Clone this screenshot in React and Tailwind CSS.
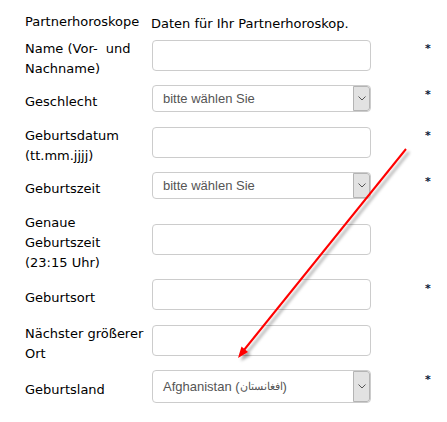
export default function App() {
  const Star = () => (
    <div className="absolute left-[400px] top-[0px] h-[16px] text-[11px] leading-[16px] mt-[2px] font-bold text-[#0b1a3a] font-['DejaVu_Sans',sans-serif]">*</div>
  );
  const Input = ({ h = 31 }) => (
    <div className="w-[219px] border border-[#cccccc] rounded-[4px] bg-white" style={{ height: h }} />
  );
  const Select = ({ text, h = 27 }) => (
    <div
      className="w-[219px] border border-[#cccccc] rounded-[4px] bg-white flex items-stretch overflow-hidden"
      style={{ height: h }}
    >
      <div className="flex-1 flex items-center pl-[10px] text-[13px] text-[#555555] font-['Liberation_Sans',sans-serif] whitespace-nowrap">
        {text}
      </div>
      <div className="w-[17px] bg-[#e2e2e2] border border-[#b4b4b4] rounded-r-[3px] flex items-center justify-center">
        <svg width="8" height="5" viewBox="0 0 8 5">
          <path d="M0.5 0.5 L4 4 L7.5 0.5" fill="none" stroke="#555" strokeWidth="1" />
        </svg>
      </div>
    </div>
  );
  const Row = ({ label, children, star }) => (
    <div className="relative flex items-center">
      <div className="w-[126px] shrink-0 text-[13px] leading-[20px] text-[#000] whitespace-nowrap">{label}</div>
      <div className="pb-[7px] pl-[1px]">{children}</div>
      {star && <Star />}
    </div>
  );
  return (
    <div className="relative w-[447px] h-[422px] overflow-hidden bg-white font-['DejaVu_Sans',sans-serif]">
      <div className="pl-[25px] pt-[12px] flex flex-col gap-[6.5px]">
        <div className="flex items-center text-[13px] leading-[20px] text-[#000]">
          <div className="w-[126px] shrink-0 whitespace-nowrap">Partnerhoroskope</div>
          <div className="whitespace-nowrap relative top-[2px]">Daten für Ihr Partnerhoroskop.</div>
        </div>
        <Row star label={<>Name (Vor-&nbsp; und<br />Nachname)</>}>
          <Input />
        </Row>
        <Row star label="Geschlecht">
          <Select text="bitte wählen Sie" />
        </Row>
        <Row star label={<>Geburtsdatum<br />(tt.mm.jjjj)</>}>
          <Input />
        </Row>
        <Row star label="Geburtszeit">
          <Select text="bitte wählen Sie" />
        </Row>
        <Row label={<>Genaue<br />Geburtszeit<br />(23:15 Uhr)</>}>
          <Input />
        </Row>
        <Row star label="Geburtsort">
          <Input />
        </Row>
        <Row label={<>Nächster größerer<br />Ort</>}>
          <Input />
        </Row>
        <Row star label="Geburtsland">
          <Select h={33} text={<>Afghanistan (<span className="text-[11px]">افغانستان</span>)</>} />
        </Row>
      </div>
      <svg className="absolute inset-0 pointer-events-none" width="447" height="422">
        <defs>
          <filter id="sh" x="-20%" y="-20%" width="140%" height="140%">
            <feDropShadow dx="3" dy="3" stdDeviation="1.5" floodColor="#000" floodOpacity="0.35" />
          </filter>
        </defs>
        <g filter="url(#sh)">
          <line x1="406" y1="149" x2="244" y2="350" stroke="#ff0000" strokeWidth="2" />
          <polygon points="238,358 248,352 241.5,346.5" fill="#ff0000" />
        </g>
      </svg>
    </div>
  );
}
